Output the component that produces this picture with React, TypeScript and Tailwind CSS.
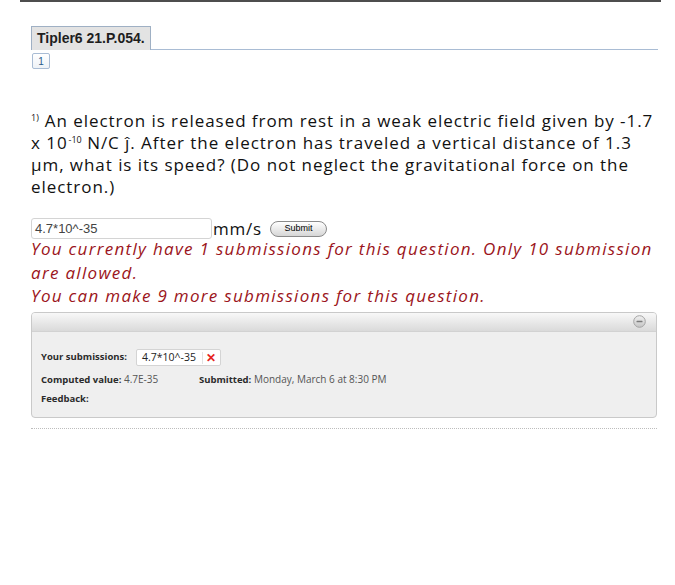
import React from 'react';

const sans = { fontFamily: '"Open Sans", "Noto Sans", sans-serif' };
const arial = { fontFamily: '"Liberation Sans", Arial, sans-serif' };

function MinusCircle() {
  return (
    <svg width="13" height="13" viewBox="0 0 13 13">
      <defs>
        <linearGradient id="mc" x1="0" y1="0" x2="0" y2="1">
          <stop offset="0" stopColor="#f2f2f2" />
          <stop offset="1" stopColor="#c4c4c4" />
        </linearGradient>
      </defs>
      <circle cx="6.5" cy="6.5" r="5.8" fill="url(#mc)" stroke="#a4a4a4" strokeWidth="1" />
      <rect x="3.5" y="5.8" width="6" height="1.5" rx="0.5" fill="#7a7a7a" />
    </svg>
  );
}

export default function App() {
  return (
    <div className="w-[675px] h-[585px] bg-white">
      <div className="ml-[20px] mr-[14px] h-[2px] bg-[#4d4d4d]" />

      <div className="pl-[31px] pr-[17px] pt-[24px]">
        {/* tab header */}
        <div className="flex items-end">
          <div
            className="h-[24px] px-[5px] flex items-center bg-[#e3e3e3] border border-[#9fb0c4] border-b-0 text-[14px] font-bold text-[#1e1e1e]"
            style={arial}
          >
            Tipler6 21.P.054.
          </div>
          <div className="flex-1 h-px bg-[#a9bcd4]" />
        </div>
        <div
          className="mt-[3px] ml-[1px] w-[18px] h-[16px] border border-[#a9bcd4] rounded-[2px] flex items-center justify-center text-[10px] text-[#2a5a8a] bg-gradient-to-b from-white to-[#eef2f7]"
          style={arial}
        >
          1
        </div>

        {/* question */}
        <div className="mt-[41px] text-[17px] leading-[22px] tracking-[0.95px] text-[#111]" style={sans}>
          <span className="relative top-[-6px] text-[9px] leading-none tracking-normal mr-[6px]">1)</span>
          An electron is released from rest in a weak electric field given by -1.7 x 10
          <span className="relative top-[-6px] text-[9px] leading-none tracking-normal ml-[1px]">-10</span> N/C ĵ.
          After the electron has traveled a vertical distance of 1.3 µm, what is its speed? (Do not neglect the
          gravitational force on the electron.)
        </div>

        {/* answer row */}
        <div className="mt-[20px] flex items-center">
          <div
            className="w-[181px] h-[21px] border border-[#d4d4d4] rounded-[3px] flex items-center px-[3px] text-[13px] text-[#444]"
            style={arial}
          >
            4.7*10^-35
          </div>
          <span className="ml-[1px] text-[17px] leading-[20px] tracking-[0.8px] text-[#111]" style={sans}>
            mm/s
          </span>
          <div
            className="ml-[8px] h-[16px] w-[57px] justify-center rounded-full border border-[#8a8a8a] bg-gradient-to-b from-white to-[#d6d6d6] text-[9px] flex items-center text-black"
            style={arial}
          >
            Submit
          </div>
        </div>

        {/* status messages */}
        <div
          className="mt-[-2px] text-[17px] leading-[23.5px] italic tracking-[1.3px] text-[#9b1420]"
          style={sans}
        >
          <div>You currently have 1 submissions for this question. Only 10 submission are allowed.</div>
          <div>You can make 9 more submissions for this question.</div>
        </div>

        {/* submissions panel */}
        <div className="mt-[4px] mr-[1px] h-[106px] border border-[#c9c9c9] rounded-[4px] bg-[#efefef] overflow-hidden">
          <div className="h-[19px] bg-gradient-to-b from-[#f8f8f8] to-[#dadada] border-b border-[#d2d2d2] flex items-center justify-end pr-[10px]">
            <MinusCircle />
          </div>
          <div className="pl-[9px] pt-[17px] text-[10px] text-[#2b2b2b]" style={sans}>
            <div className="flex items-center h-[18px]">
              <span className="font-bold text-[9.5px] w-[95px] whitespace-nowrap">Your submissions:</span>
              <div className="h-[17px] flex items-center bg-white border border-[#d4d4d4] rounded-[2px] pl-[5px] pr-[4px] text-[10.5px] text-[#222]">
                4.7*10^-35
                <span className="ml-[6px] w-px h-[12px] bg-[#e2e2e2]" />
                <span className="ml-[3px] text-[#e5251e] font-bold text-[12px] leading-none" style={arial}>
                  ✕
                </span>
              </div>
            </div>
            <div className="flex mt-[6px] h-[15px] items-center">
              <span className="w-[158px] whitespace-nowrap">
                <span className="font-bold text-[9.5px]">Computed value:</span>{' '}
                <span className="text-[#555]">4.7E-35</span>
              </span>
              <span className="whitespace-nowrap">
                <span className="font-bold text-[9.5px]">Submitted:</span>{' '}
                <span className="text-[#555]">Monday, March 6 at 8:30 PM</span>
              </span>
            </div>
            <div className="mt-[4px] h-[15px] flex items-center font-bold text-[9.5px]">Feedback:</div>
          </div>
        </div>
        <div className="mt-[10px] mr-[1px] border-t border-dotted border-[#bdbdbd]" />
      </div>
    </div>
  );
}
